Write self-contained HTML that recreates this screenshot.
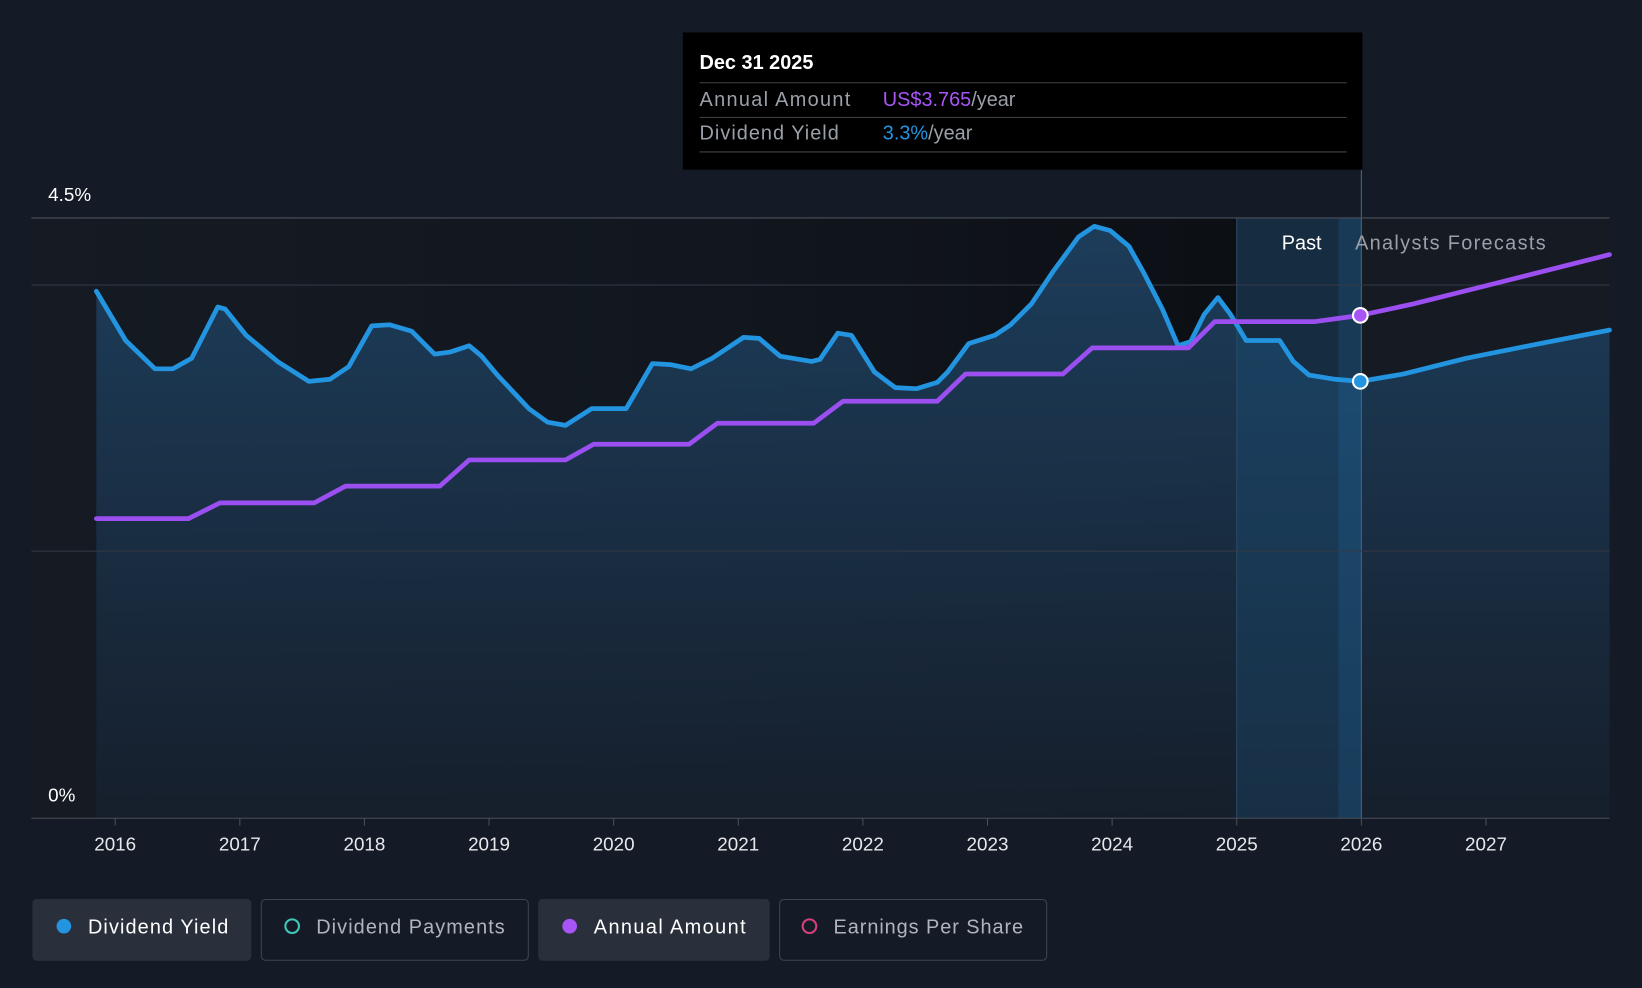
<!DOCTYPE html>
<html><head><meta charset="utf-8"><style>
html,body{margin:0;padding:0;background:#151b26;}
svg{display:block;font-family:"Liberation Sans",Arial,sans-serif;}
</style></head><body>
<svg width="1642" height="988" viewBox="0 0 1568 943" preserveAspectRatio="none" xmlns="http://www.w3.org/2000/svg">
<defs>
<linearGradient id="fillg" x1="0" y1="0" x2="0" y2="1">
<stop offset="0" stop-color="#1d3f5e" stop-opacity="0.95"/>
<stop offset="1" stop-color="#161f2c" stop-opacity="0.95"/>
</linearGradient>
<linearGradient id="bgg" x1="0" y1="0" x2="1" y2="0">
<stop offset="0" stop-color="#151a23"/>
<stop offset="0.55" stop-color="#12171f"/>
<stop offset="1" stop-color="#0c0f14"/>
</linearGradient>
</defs>
<rect width="1568" height="943" fill="#151b26"/>
<rect x="30" y="208" width="1151" height="573" fill="url(#bgg)"/>
<rect x="1300" y="208" width="237" height="573" fill="#151a23"/>
<path d="M92,278 L120,325 L148,352 L165,352 L183,342 L208,293 L215,295 L235,320 L265,345 L295,364 L315,362 L333,350 L355,311 L372,310 L393,316 L415,338 L430,336 L448,330 L460,340 L475,358 L505,390 L523,403 L540,406 L565,390 L598,390 L623,347 L640,348 L660,352 L680,342 L710,322 L725,323 L745,340 L775,345 L783,343 L800,318 L813,320 L835,355 L855,370 L875,371 L895,365 L905,355 L925,328 L950,320 L965,310 L985,290 L1005,260 L1030,226 L1045,216 L1060,220 L1078,235 L1092,260 L1110,295 L1125,330 L1137,326 L1150,300 L1163,284 L1175,300 L1190,325 L1222,325 L1235,345 L1250,358 L1275,362 L1299,364 L1340,357 L1400,342 L1470,328 L1537,315 L1537,781 L92,781 Z" fill="url(#fillg)"/>
<rect x="1181" y="208" width="97" height="573" fill="#1a5580" opacity="0.3"/>
<rect x="1278" y="208" width="22" height="573" fill="#1f6aa0" opacity="0.4"/>
<line x1="1181" y1="208" x2="1181" y2="781" stroke="#2a4a66" stroke-width="1"/>
<line x1="1300" y1="162" x2="1300" y2="781" stroke="#3a6a90" stroke-width="1"/>
<line x1="30" y1="208" x2="1537" y2="208" stroke="#4a505a" stroke-width="1"/>
<line x1="30" y1="272" x2="1537" y2="272" stroke="#343a44" stroke-width="1"/>
<line x1="30" y1="526" x2="1537" y2="526" stroke="#343a44" stroke-width="1"/>
<line x1="30" y1="781" x2="1537" y2="781" stroke="#4a505a" stroke-width="1"/>
<path d="M92,278 L120,325 L148,352 L165,352 L183,342 L208,293 L215,295 L235,320 L265,345 L295,364 L315,362 L333,350 L355,311 L372,310 L393,316 L415,338 L430,336 L448,330 L460,340 L475,358 L505,390 L523,403 L540,406 L565,390 L598,390 L623,347 L640,348 L660,352 L680,342 L710,322 L725,323 L745,340 L775,345 L783,343 L800,318 L813,320 L835,355 L855,370 L875,371 L895,365 L905,355 L925,328 L950,320 L965,310 L985,290 L1005,260 L1030,226 L1045,216 L1060,220 L1078,235 L1092,260 L1110,295 L1125,330 L1137,326 L1150,300 L1163,284 L1175,300 L1190,325 L1222,325 L1235,345 L1250,358 L1275,362 L1299,364 L1340,357 L1400,342 L1470,328 L1537,315" fill="none" stroke="#2394e0" stroke-width="4.5" stroke-linejoin="round" stroke-linecap="round"/>
<path d="M92,495 L180,495 L210,480 L300,480 L330,464 L420,464 L448,439 L540,439 L567,424 L658,424 L685,404 L777,404 L805,383 L895,383 L922,357 L1015,357 L1043,332 L1135,332 L1160,307 L1255,307 L1299,301 L1350,290 L1430,270 L1537,243" fill="none" stroke="#9b4ff0" stroke-width="4.5" stroke-linejoin="round" stroke-linecap="round"/>
<circle cx="1299" cy="301" r="7" fill="#a855f7" stroke="#fff" stroke-width="2"/>
<circle cx="1299" cy="364" r="7" fill="#2394e0" stroke="#fff" stroke-width="2"/>
<text x="46" y="192" fill="#fff" font-size="18">4.5%</text>
<text x="46" y="765" fill="#fff" font-size="18">0%</text>
<text x="1262" y="238" fill="#fff" font-size="19" text-anchor="end">Past</text>
<text x="1294" y="238" fill="#9aa0a8" font-size="19" textLength="182">Analysts Forecasts</text>
<g fill="#e6e8ec" font-size="18" text-anchor="middle">
<text x="110" y="812">2016</text><text x="229" y="812">2017</text><text x="348" y="812">2018</text>
<text x="467" y="812">2019</text><text x="586" y="812">2020</text><text x="705" y="812">2021</text>
<text x="824" y="812">2022</text><text x="943" y="812">2023</text><text x="1062" y="812">2024</text>
<text x="1181" y="812">2025</text><text x="1300" y="812">2026</text><text x="1419" y="812">2027</text>
</g>
<g stroke="#4a505a"><line x1="110" y1="781" x2="110" y2="788"/><line x1="229" y1="781" x2="229" y2="788"/><line x1="348" y1="781" x2="348" y2="788"/><line x1="467" y1="781" x2="467" y2="788"/><line x1="586" y1="781" x2="586" y2="788"/><line x1="705" y1="781" x2="705" y2="788"/><line x1="824" y1="781" x2="824" y2="788"/><line x1="943" y1="781" x2="943" y2="788"/><line x1="1062" y1="781" x2="1062" y2="788"/><line x1="1181" y1="781" x2="1181" y2="788"/><line x1="1300" y1="781" x2="1300" y2="788"/><line x1="1419" y1="781" x2="1419" y2="788"/></g>
<rect x="652" y="31" width="649" height="131" fill="#000"/>
<text x="668" y="66" fill="#fff" font-size="19" font-weight="bold">Dec 31 2025</text>
<line x1="668" y1="79" x2="1286" y2="79" stroke="#444"/>
<text x="668" y="101" fill="#9aa0a8" font-size="19" textLength="144">Annual Amount</text>
<text x="843" y="101" font-size="19"><tspan fill="#a855f7">US$3.765</tspan><tspan fill="#9aa0a8">/year</tspan></text>
<line x1="668" y1="112" x2="1286" y2="112" stroke="#444"/>
<text x="668" y="133" fill="#9aa0a8" font-size="19" textLength="133">Dividend Yield</text>
<text x="843" y="133" font-size="19"><tspan fill="#2394e0">3.3%</tspan><tspan fill="#9aa0a8">/year</tspan></text>
<line x1="668" y1="145" x2="1286" y2="145" stroke="#444"/>
<rect x="31" y="858" width="209" height="59" rx="4" fill="#2a303b"/>
<circle cx="61" cy="884" r="7" fill="#2394e0"/>
<text x="84" y="891" fill="#fff" font-size="19" textLength="134">Dividend Yield</text>
<rect x="249.5" y="858.5" width="255" height="58" rx="4" fill="none" stroke="#3e4450"/>
<circle cx="279" cy="884" r="6.5" fill="none" stroke="#3fc9b8" stroke-width="2"/>
<text x="302" y="891" fill="#b0b5bd" font-size="19" textLength="180">Dividend Payments</text>
<rect x="514" y="858" width="221" height="59" rx="4" fill="#2a303b"/>
<circle cx="544" cy="884" r="7" fill="#a855f7"/>
<text x="567" y="891" fill="#fff" font-size="19" textLength="145">Annual Amount</text>
<rect x="744.5" y="858.5" width="255" height="58" rx="4" fill="none" stroke="#3e4450"/>
<circle cx="773" cy="884" r="6.5" fill="none" stroke="#d6407a" stroke-width="2"/>
<text x="796" y="891" fill="#b0b5bd" font-size="19" textLength="181">Earnings Per Share</text>
</svg>
</body></html>
